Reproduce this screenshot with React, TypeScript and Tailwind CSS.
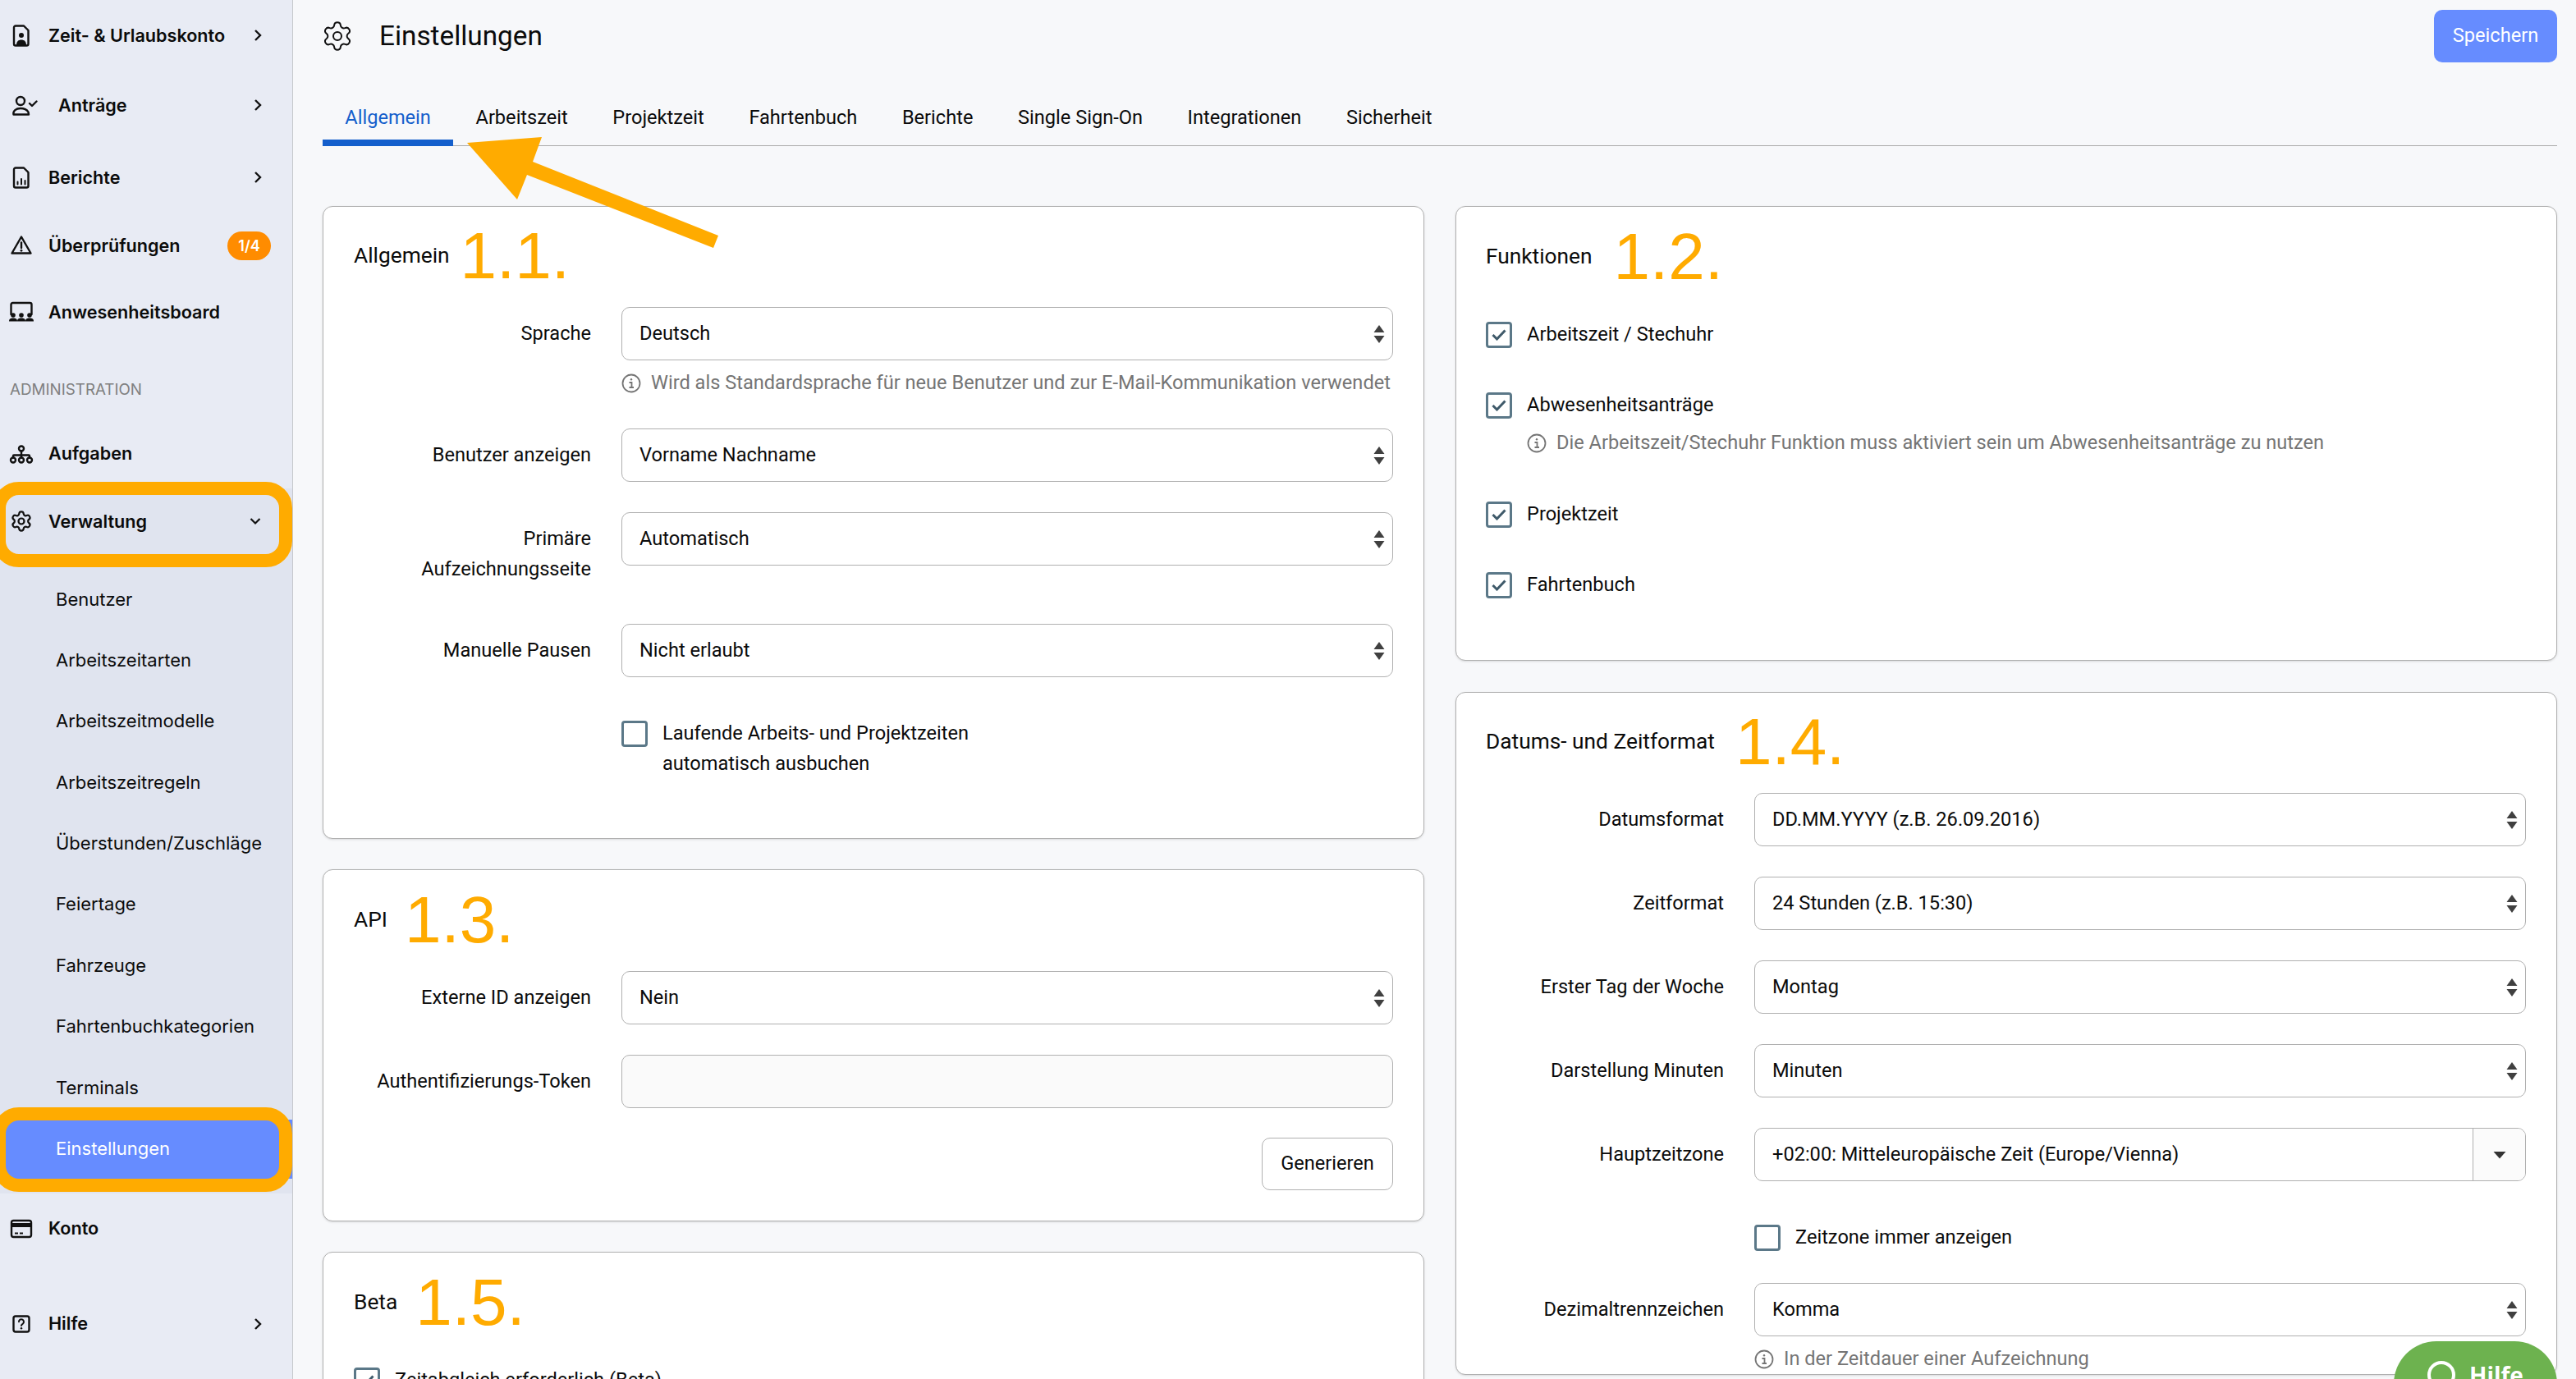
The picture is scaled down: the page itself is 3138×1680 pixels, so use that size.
import React from "react";
import { Settings } from "lucide-react";

const Chevron = () => (
  <svg width="10" height="16" viewBox="0 0 10 16" fill="none" stroke="#111" strokeWidth="2.4" className="ml-auto mr-[37px]">
    <path d="M2 2l6 6-6 6" />
  </svg>
);

const icon = { fill: "none", stroke: "#111", strokeWidth: 2.4, strokeLinejoin: "round" as const, strokeLinecap: "round" as const };

const DocShape = () => (
  <path d="M9 4.500h10l5.500 5.500v16.500a2 2 0 0 1-2 2h-13.500a2 2 0 0 1-2-2V6.500a2 2 0 0 1 2-2z" {...icon} />
);

const FileUserIcon = () => (
  <svg width="32" height="32" viewBox="0 0 32 32">
    <DocShape />
    <circle cx="16" cy="16" r="3" fill="#111" />
    <path d="M10 28c0-4.500 2.500-6.500 6-6.500s6 2 6 6.500z" fill="#111" />
  </svg>
);

const UserCheckIcon = () => (
  <svg width="36" height="32" viewBox="0 0 36 32">
    <circle cx="15" cy="11" r="5" {...icon} />
    <path d="M6.500 27.500c-1-4.500 3-7.500 8.500-7.500 5 0 8 2 9.500 4.500l.5 3z" {...icon} />
    <path d="M26 14l3 3 5.500-5.500" {...icon} />
  </svg>
);

const FileChartIcon = () => (
  <svg width="32" height="32" viewBox="0 0 32 32">
    <DocShape />
    <path d="M11.500 24.500v-3M16 24.500v-6.500M20.500 24.500v-4.500" {...icon} strokeWidth={2} />
  </svg>
);

const WarningIcon = () => (
  <svg width="32" height="32" viewBox="0 0 32 32">
    <path d="M16 5.500L27.500 25.500h-23z" {...icon} />
    <path d="M16 12.500v6.500" {...icon} />
    <circle cx="16" cy="22.300" r="1.400" fill="#111" />
  </svg>
);

const Person = ({ x }: { x: number }) => (
  <g>
    <circle cx={x} cy="20" r="2.800" fill="#111" />
    <path d={`M${x - 5} 27.500c0-3 1.500-4 5-4s5 1 5 4z`} fill="#111" />
  </g>
);

const BoardIcon = () => (
  <svg width="32" height="32" viewBox="0 0 32 32">
    <path d="M3.500 19V7a2 2 0 0 1 2-2h21a2 2 0 0 1 2 2v12" {...icon} />
    <Person x={6} />
    <Person x={16} />
    <Person x={26} />
  </svg>
);

const SitemapIcon = () => (
  <svg width="32" height="32" viewBox="0 0 32 32">
    <circle cx="16" cy="10.500" r="3" {...icon} />
    <path d="M16 13.500v8M6 21.500v-2a1 1 0 0 1 1-1h18a1 1 0 0 1 1 1v2" {...icon} />
    <circle cx="6" cy="24.500" r="3" {...icon} />
    <circle cx="16" cy="24.500" r="3" {...icon} />
    <circle cx="26" cy="24.500" r="3" {...icon} />
  </svg>
);

const CardIcon = () => (
  <svg width="32" height="32" viewBox="0 0 32 32">
    <rect x="4" y="6" width="24" height="20" rx="2.500" {...icon} />
    <path d="M4 9h24v5H4z" fill="#111" />
    <path d="M8 21.500h4M14 21.500h4" {...icon} strokeWidth={2} strokeLinecap="butt" />
  </svg>
);

const HelpBoxIcon = () => (
  <svg width="32" height="32" viewBox="0 0 32 32">
    <rect x="6.500" y="6.500" width="19" height="19" rx="2.500" {...icon} />
    <path d="M13 13.300a3 3 0 1 1 4.600 2.500c-1 .6-1.600 1.100-1.600 2.200" {...icon} strokeWidth={2} />
    <circle cx="16" cy="21.300" r="1.200" fill="#111" />
  </svg>
);

const SideRow = ({
  icon,
  label,
  className = "",
  textMl = "ml-[17px]",
  children,
}: {
  icon: React.ReactNode;
  label: string;
  className?: string;
  textMl?: string;
  children?: React.ReactNode;
}) => (
  <div className={`relative flex h-[72px] items-center pl-[10px] ${className}`}>
    {icon}
    <span className={`${textMl} text-[21.600px] font-semibold text-[#0b0b0b]`}>{label}</span>
    {children}
  </div>
);

const subItems = [
  "Benutzer",
  "Arbeitszeitarten",
  "Arbeitszeitmodelle",
  "Arbeitszeitregeln",
  "Überstunden/Zuschläge",
  "Feiertage",
  "Fahrzeuge",
  "Fahrtenbuchkategorien",
  "Terminals",
];

const Sidebar = () => (
  <aside className="h-[1680px] w-[357px] shrink-0 overflow-hidden border-r border-[#c6c8cc] bg-[#e8ebf4] pt-[7px] font-[Inter,sans-serif]">
    <SideRow icon={<FileUserIcon />} label="Zeit- & Urlaubskonto">
      <Chevron />
    </SideRow>
    <SideRow icon={<UserCheckIcon />} label="Anträge" className="mt-[13px]" textMl="ml-[25px]">
      <Chevron />
    </SideRow>
    <SideRow icon={<FileChartIcon />} label="Berichte" className="mt-[16px]">
      <Chevron />
    </SideRow>
    <SideRow icon={<WarningIcon />} label="Überprüfungen" className="mt-[11px]">
      <span className="ml-auto mr-[26px] flex h-[35px] w-[53px] items-center justify-center rounded-full bg-[#ff8c00] text-[18px] font-semibold text-white">
        1/4
      </span>
    </SideRow>
    <SideRow icon={<BoardIcon />} label="Anwesenheitsboard" className="mt-[9px]" />
    <div className="mt-[44px] flex h-[30px] items-center pl-[12px] text-[18.800px] text-[#808080]">ADMINISTRATION</div>
    <SideRow icon={<SitemapIcon />} label="Aufgaben" className="mt-[26px]" />

    <div className="mt-[7px] bg-[#e0e4ef] pb-[18px] pt-[4px]">
      <SideRow icon={<Settings size={28} strokeWidth={1.900} color="#111" className="mx-[2px]" />} label="Verwaltung">
        <svg width="14" height="10" viewBox="0 0 14 10" fill="none" stroke="#111" strokeWidth="2.200" className="ml-auto mr-[38px]">
          <path d="M1.500 2l5.500 5.500L12.500 2" />
        </svg>
        <div className="absolute -bottom-[20px] -left-[9px] -top-[12px] right-0 rounded-[32px] border-[16px] border-[#ffab00]" />
      </SideRow>
      <div className="mt-[23px] flex flex-col gap-[2.400px]">
        {subItems.map((item) => (
          <div key={item} className="flex h-[72px] items-center pl-[68px] text-[22px] text-[#0b0b0b]">
            {item}
          </div>
        ))}
        <div className="relative flex h-[72px] items-center bg-[#668cff] pl-[68px] text-[22px] text-white">
          Einstellungen
          <div className="absolute -bottom-[16px] -left-[9px] -top-[15px] right-0 rounded-[32px] border-[16px] border-[#ffab00]" />
        </div>
      </div>
    </div>

    <SideRow icon={<CardIcon />} label="Konto" className="mt-[7px]" />
    <SideRow icon={<HelpBoxIcon />} label="Hilfe" className="mt-[44px]">
      <Chevron />
    </SideRow>
  </aside>
);

const Stepper = () => (
  <svg width="14" height="22" viewBox="0 0 14 22" fill="#404040" className="shrink-0">
    <path d="M7 0l6.500 9H.5zM7 22L.5 13h13z" />
  </svg>
);

const Select = ({ value }: { value: string }) => (
  <div className="flex h-[65px] flex-1 items-center justify-between rounded-[10px] border border-[#b0b0b0] bg-white pl-[21px] pr-[9px]">
    <span>{value}</span>
    <Stepper />
  </div>
);

const FormRow = ({ label, children, className = "" }: { label: React.ReactNode; children: React.ReactNode; className?: string }) => (
  <div className={`flex items-start ${className}`}>
    <div className="w-[289px] shrink-0 pt-[14px] text-right leading-[37px]">{label}</div>
    <div className="ml-[37px] flex flex-1">{children}</div>
  </div>
);

const CheckBox = ({ checked = false }: { checked?: boolean }) => (
  <span className="flex h-[32px] w-[32px] shrink-0 items-center justify-center rounded-[4px] border-[3px] border-[#5b7888] bg-white">
    {checked && (
      <svg width="18" height="14" viewBox="0 0 18 14" fill="none" stroke="#3f5a6a" strokeWidth="3">
        <path d="M1.500 7l5 5L16.500 1.500" />
      </svg>
    )}
  </span>
);

const CheckRow = ({ checked, children, className = "" }: { checked?: boolean; children: React.ReactNode; className?: string }) => (
  <div className={`flex items-start leading-[37px] ${className}`}>
    <span className="mt-[2.500px]">
      <CheckBox checked={checked} />
    </span>
    <span className="ml-[18px]">{children}</span>
  </div>
);

const InfoIcon = () => (
  <svg width="24" height="24" viewBox="0 0 24 24" fill="none" stroke="#757575" strokeWidth="1.800" className="shrink-0">
    <circle cx="12" cy="12" r="10.500" />
    <path d="M9.500 11h3v6M9.500 17h5.500" />
    <circle cx="12" cy="7.300" r="1.200" fill="#757575" stroke="none" />
  </svg>
);

const HelpText = ({ children, className = "" }: { children: React.ReactNode; className?: string }) => (
  <div className={`flex items-center leading-[37px] text-[#757575] ${className}`}>
    <InfoIcon />
    <span className="ml-[12px]">{children}</span>
  </div>
);

const CardTitle = ({ title, mark, gap, className = "" }: { title: string; mark: string; gap: string; className?: string }) => (
  <div className={`flex h-[38px] items-center ${className}`}>
    <span className="text-[26.300px]">{title}</span>
    <span className={`${gap} font-['Liberation_Sans',sans-serif] text-[80px] leading-none text-[#ffab00]`}>{mark}</span>
  </div>
);

const Card = ({ children, className = "" }: { children: React.ReactNode; className?: string }) => (
  <section className={`rounded-[12px] border border-[#b0b0b0] bg-white shadow-sm ${className}`}>{children}</section>
);

const tabs = ["Allgemein", "Arbeitszeit", "Projektzeit", "Fahrtenbuch", "Berichte", "Single Sign-On", "Integrationen", "Sicherheit"];

const App: React.FC = () => {
  return (
    <div className="relative flex h-[1680px] w-[3138px] overflow-hidden bg-[#f7f8fa] font-[Roboto,sans-serif] text-[23.600px] text-[#0b0b0b]">
      <Sidebar />

      <main className="w-[2781px] pl-[36px] pr-[23px] pt-[12px]">
        <header className="flex h-[64px] items-center">
          <Settings size={40} strokeWidth={1.200} color="#111" className="-ml-[2px]" />
          <h1 className="ml-[31px] text-[33.300px]">Einstellungen</h1>
          <button className="ml-auto h-[64px] w-[150px] rounded-[10px] bg-[#668cff] text-white">Speichern</button>
        </header>

        <nav className="flex h-[102px] items-end border-b border-[#aaaaaa]">
          {tabs.map((tab, i) => (
            <div
              key={tab}
              className={`-mb-px flex h-[72px] items-center border-b-8 px-[27.300px] pt-[11px] ${
                i === 0 ? "border-[#145fcc] text-[#145fcc]" : "border-transparent"
              }`}
            >
              {tab}
            </div>
          ))}
        </nav>

        <div className="mt-[73px] grid grid-cols-2 items-start gap-x-[38px]">
          <div className="flex flex-col gap-[37px]">
            <Card className="px-[37px] pb-[72px] pt-[41px]">
              <CardTitle title="Allgemein" mark="1.1." gap="ml-[13px]" />
              <FormRow label="Sprache" className="mt-[43px]">
                <Select value="Deutsch" />
              </FormRow>
              <HelpText className="ml-[326px] mt-[9px]">
                Wird als Standardsprache für neue Benutzer und zur E-Mail-Kommunikation verwendet
              </HelpText>
              <FormRow label="Benutzer anzeigen" className="mt-[37px]">
                <Select value="Vorname Nachname" />
              </FormRow>
              <FormRow
                label={
                  <>
                    Primäre
                    <br />
                    Aufzeichnungsseite
                  </>
                }
                className="mt-[37px]"
              >
                <Select value="Automatisch" />
              </FormRow>
              <FormRow label="Manuelle Pausen" className="mt-[48px]">
                <Select value="Nicht erlaubt" />
              </FormRow>
              <CheckRow className="ml-[326px] mt-[50px]">
                Laufende Arbeits- und Projektzeiten
                <br />
                automatisch ausbuchen
              </CheckRow>
            </Card>

            <Card className="px-[37px] pb-[37px] pt-[42px]">
              <CardTitle title="API" mark="1.3." gap="ml-[21px]" />
              <FormRow label="Externe ID anzeigen" className="mt-[43px]">
                <Select value="Nein" />
              </FormRow>
              <FormRow label="Authentifizierungs-Token" className="mt-[37px]">
                <div className="h-[65px] flex-1 rounded-[10px] border border-[#b0b0b0] bg-[#fafafa]" />
              </FormRow>
              <div className="mt-[36px] flex justify-end">
                <button className="h-[64px] w-[160px] rounded-[10px] border border-[#b0b0b0] bg-white">Generieren</button>
              </div>
            </Card>

            <Card className="px-[37px] pb-[40px] pt-[42px]">
              <CardTitle title="Beta" mark="1.5." gap="ml-[22px]" />
              <CheckRow checked className="mt-[57px]">
                Zeitabgleich erforderlich (Beta)
              </CheckRow>
            </Card>
          </div>

          <div className="flex flex-col gap-[38px]">
            <Card className="px-[36px] pb-[73px] pt-[42px]">
              <CardTitle title="Funktionen" mark="1.2." gap="ml-[26px]" />
              <CheckRow checked className="mt-[57px]">
                Arbeitszeit / Stechuhr
              </CheckRow>
              <CheckRow checked className="mt-[49px]">
                Abwesenheitsanträge
              </CheckRow>
              <HelpText className="ml-[50px] mt-[9px]">
                Die Arbeitszeit/Stechuhr Funktion muss aktiviert sein um Abwesenheitsanträge zu nutzen
              </HelpText>
              <CheckRow checked className="mt-[50px]">
                Projektzeit
              </CheckRow>
              <CheckRow checked className="mt-[49px]">
                Fahrtenbuch
              </CheckRow>
            </Card>

            <Card className="px-[37px] pt-[41px]">
              <CardTitle title="Datums- und Zeitformat" mark="1.4." gap="ml-[25px]" className="-ml-px" />
              <FormRow label="Datumsformat" className="mt-[43px]">
                <Select value="DD.MM.YYYY (z.B. 26.09.2016)" />
              </FormRow>
              <FormRow label="Zeitformat" className="mt-[37px]">
                <Select value="24 Stunden (z.B. 15:30)" />
              </FormRow>
              <FormRow label="Erster Tag der Woche" className="mt-[37px]">
                <Select value="Montag" />
              </FormRow>
              <FormRow label="Darstellung Minuten" className="mt-[37px]">
                <Select value="Minuten" />
              </FormRow>
              <FormRow label="Hauptzeitzone" className="mt-[37px]">
                <div className="flex h-[65px] flex-1 items-center overflow-hidden rounded-[10px] border border-[#b0b0b0] bg-white pl-[21px]">
                  <span>+02:00: Mitteleuropäische Zeit (Europe/Vienna)</span>
                  <span className="ml-auto flex h-full w-[64px] items-center justify-center border-l border-[#b0b0b0] bg-[#fbfbfb]">
                    <svg width="16" height="10" viewBox="0 0 16 10" fill="#333">
                      <path d="M0.500 1h15L8 9.500z" />
                    </svg>
                  </span>
                </div>
              </FormRow>
              <CheckRow className="ml-[326px] mt-[50px]">Zeitzone immer anzeigen</CheckRow>
              <FormRow label="Dezimaltrennzeichen" className="mt-[37px]">
                <Select value="Komma" />
              </FormRow>
              <HelpText className="ml-[326px] mt-[9px]">In der Zeitdauer einer Aufzeichnung</HelpText>
            </Card>
          </div>
        </div>
      </main>

      {/* annotation arrow drawn over the tab bar */}
      <svg className="pointer-events-none absolute left-0 top-0" width="900" height="320" viewBox="0 0 900 320" fill="#ffab00">
        <polygon points="569,174 660,167 649,197 875,287 869,302 642,213 630,243" />
      </svg>

      {/* floating help widget */}
      <div className="absolute left-[2916px] top-[1634px] flex h-[90px] w-[199px] items-start rounded-t-[52px] bg-[#6db24f] pl-[41px] pt-[24px]">
        <span className="h-[34px] w-[34px] shrink-0 rounded-full border-4 border-white" />
        <span className="-mt-[3px] ml-[17px] font-['Open_Sans',sans-serif] text-[28px] font-bold leading-[40px] text-white">Hilfe</span>
      </div>
    </div>
  );
};

export default App;
